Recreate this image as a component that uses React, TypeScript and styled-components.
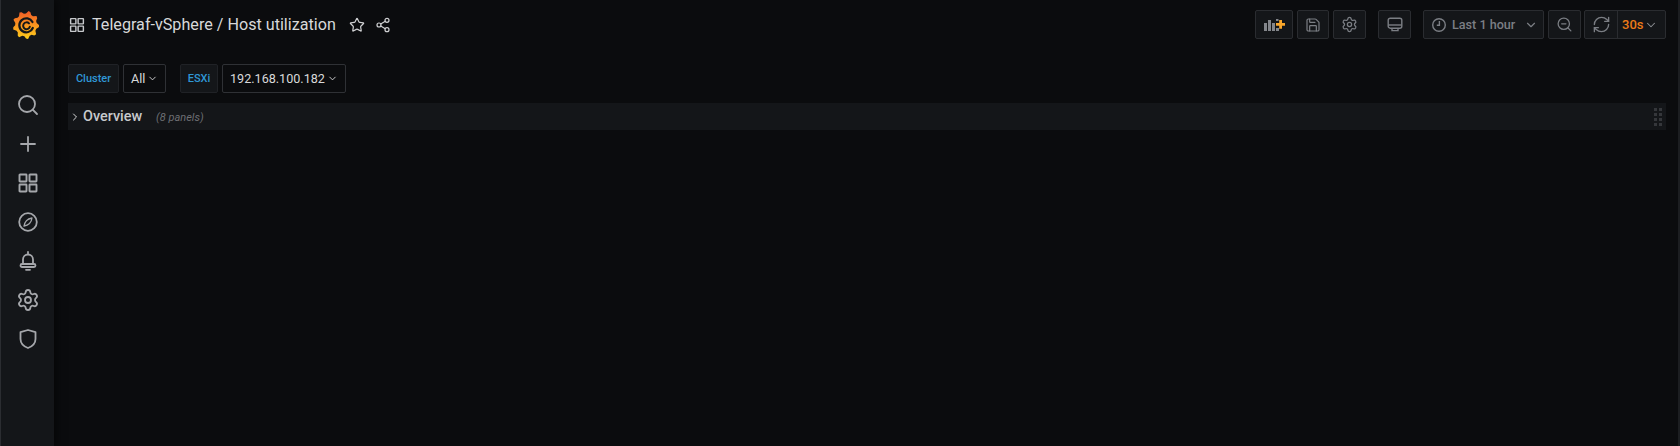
import React from 'react';
import styled, { createGlobalStyle } from 'styled-components';
import {
  Search, Plus, Settings, Star, Share2,
  ChevronDown, ChevronRight, Save, ZoomOut, RefreshCw,
} from 'lucide-react';

const GlobalStyle = createGlobalStyle`
  html, body {
    margin: 0;
    height: 100%;
    background: #0b0c0e;
    overflow: hidden;
  }
  #root {
    height: 100%;
  }
`;

// gear outline of the logo, teeth lean slightly clockwise
const gearPath = (() => {
  const teeth = 9;
  const step = (Math.PI * 2) / teeth;
  const points: string[] = [];
  for (let i = 0; i < teeth; i++) {
    const a = i * step - Math.PI / 2;
    const corners: [number, number][] = [[11.4, 0], [14.2, 0.28], [13.6, 0.5], [11.4, 0.72]];
    corners.forEach(([r, t]) => {
      const x = 13 + Math.cos(a + t * step) * r * 0.95;
      const y = 14 + Math.sin(a + t * step) * r;
      points.push(`${x.toFixed(2)} ${y.toFixed(2)}`);
    });
  }
  return `M${points.join('L')}Z`;
})();

function GrafanaLogo() {
  return (
    <svg width="26" height="28" viewBox="0 0 26 28">
      <defs>
        <linearGradient id="logoFill" x1="0" y1="1" x2="0" y2="0">
          <stop offset="0" stopColor="#fcce1c" />
          <stop offset="0.5" stopColor="#f9951f" />
          <stop offset="1" stopColor="#f05a28" />
        </linearGradient>
      </defs>
      <path fill="url(#logoFill)" d={gearPath} />
      <path
        fill="none"
        stroke="#141619"
        strokeWidth="2.2"
        strokeLinecap="round"
        d="M19.5 11A7 7 0 1 0 19.800 17"
      />
      <path
        fill="none"
        stroke="#141619"
        strokeWidth="2"
        strokeLinecap="round"
        d="M16.800 15.800A3.400 3.400 0 1 1 16 12.400"
      />
    </svg>
  );
}

function AddPanelIcon() {
  return (
    <svg width="21" height="12" viewBox="0 0 21 12">
      <g fill="#83868b">
        <rect x="0" y="4" width="3" height="8" />
        <rect x="4" y="1" width="3" height="11" />
        <rect x="8" y="4" width="3" height="8" />
        <rect x="12" y="0" width="2.5" height="2" />
        <rect x="12" y="9" width="3" height="3" />
      </g>
      <path fill="#f9a72b" d="M15.200 1h2.800v3h3v2.800h-3v3h-2.800v-3H12V4h3.200z" />
    </svg>
  );
}

function MonitorIcon() {
  return (
    <svg width="16" height="16" viewBox="0 0 16 16" fill="none" stroke="currentColor" strokeWidth="1.4">
      <rect x="1.2" y="1.2" width="13.6" height="10" rx="2" />
      <path d="M1.2 8h13.6" />
      <path d="M5 11.2v2.4h6v-2.4" />
    </svg>
  );
}

function ClockIcon() {
  return (
    <svg width="16" height="16" viewBox="0 0 16 16" fill="none" stroke="currentColor" strokeWidth="1.4">
      <circle cx="8" cy="8" r="6.3" />
      <path d="M8.4 4v4.3H5.8" />
    </svg>
  );
}

function GridIcon({ size }: { size: number }) {
  return (
    <svg width={size} height={size} viewBox="0 0 24 24" fill="none" stroke="currentColor" strokeWidth="1.9">
      <rect x="3.5" y="3.5" width="7" height="7" rx="0.5" />
      <rect x="13.5" y="3.5" width="7" height="7" rx="0.5" />
      <rect x="3.5" y="13.5" width="7" height="7" rx="0.5" />
      <rect x="13.5" y="13.5" width="7" height="7" rx="0.5" />
    </svg>
  );
}

function CompassIcon() {
  return (
    <svg width="24" height="24" viewBox="0 0 24 24" fill="none" stroke="currentColor" strokeWidth="1.8">
      <circle cx="12" cy="12" r="8.8" />
      <path fill="none" strokeWidth="1.300" strokeLinejoin="round" d="M16 8c-.3 2.600-1.200 4.200-2.500 5.500-1.300 1.100-3 2-5.500 2.500.4-2.400 1.200-4 2.500-5.400C11.800 9.300 13.600 8.500 16 8z" />
    </svg>
  );
}

function BellIcon() {
  return (
    <svg width="24" height="24" viewBox="0 0 24 24" fill="none" stroke="currentColor" strokeWidth="1.8" strokeLinecap="round">
      <path d="M12 3v1.500" />
      <path d="M7 15v-4.500a5 5 0 0 1 10 0V15" />
      <path d="M6 15h12a1.500 1.500 0 0 1 0 3H6a1.500 1.500 0 0 1 0-3z" />
      <path d="M10 20.800h4" />
    </svg>
  );
}

function ShieldIcon() {
  return (
    <svg width="24" height="24" viewBox="0 0 24 24" fill="none" stroke="currentColor" strokeWidth="1.8" strokeLinejoin="round">
      <path d="M12 3l7.500 2.200V12c0 4.400-3 7.300-7.500 9-4.500-1.700-7.500-4.600-7.500-9V5.200z" />
    </svg>
  );
}

export default function App() {
  return (
    <Page>
      <GlobalStyle />
      <SideMenu>
        <LogoSlot>
          <GrafanaLogo />
        </LogoSlot>
        <NavList>
          <NavItem><Search size={24} strokeWidth={1.8} /></NavItem>
          <NavItem><Plus size={24} strokeWidth={1.8} /></NavItem>
          <NavItem><GridIcon size={24} /></NavItem>
          <NavItem><CompassIcon /></NavItem>
          <NavItem><BellIcon /></NavItem>
          <NavItem><Settings size={24} strokeWidth={1.8} /></NavItem>
          <NavItem><ShieldIcon /></NavItem>
        </NavList>
      </SideMenu>
      <Main>
        <TopBar>
          <TitleGroup>
            <TitleIcon><GridIcon size={18} /></TitleIcon>
            <Title>Telegraf-vSphere / Host utilization</Title>
            <TitleAction $gap={13}><Star size={16} strokeWidth={1.8} /></TitleAction>
            <TitleAction $gap={10}><Share2 size={16} strokeWidth={1.8} /></TitleAction>
          </TitleGroup>
          <Toolbar>
            <ToolButton $width={38}><AddPanelIcon /></ToolButton>
            <ToolButton $width={32} $gap={4}><Save size={16} strokeWidth={1.8} /></ToolButton>
            <ToolButton $width={33} $gap={4}><Settings size={17} strokeWidth={1.8} /></ToolButton>
            <ToolButton $width={33} $gap={12}><MonitorIcon /></ToolButton>
            <TimeButton>
              <ClockIcon />
              <TimeLabel>Last 1 hour</TimeLabel>
              <ChevronDown size={14} strokeWidth={2} />
            </TimeButton>
            <ToolButton $width={33} $gap={4}><ZoomOut size={17} strokeWidth={1.8} /></ToolButton>
            <RefreshGroup>
              <RefreshPart><RefreshCw size={19} strokeWidth={1.7} /></RefreshPart>
              <IntervalPart>
                30s
                <ChevronDown size={14} strokeWidth={1.8} color="#8e9095" />
              </IntervalPart>
            </RefreshGroup>
          </Toolbar>
        </TopBar>
        <Variables>
          <VariableGroup>
            <VariableLabel $width={51}>Cluster</VariableLabel>
            <VariableValue $width={43}>
              All
              <ChevronDown size={11} strokeWidth={2} />
            </VariableValue>
          </VariableGroup>
          <VariableGroup>
            <VariableLabel $width={38}>ESXi</VariableLabel>
            <VariableValue $width={124}>
              192.168.100.182
              <ChevronDown size={11} strokeWidth={2} />
            </VariableValue>
          </VariableGroup>
        </Variables>
        <RowHeader>
          <ChevronRight size={12} strokeWidth={2} color="#d8d9da" />
          <RowTitle>Overview</RowTitle>
          <RowCount>(8 panels)</RowCount>
          <DragHandle>
            {Array.from({ length: 8 }).map((_, i) => <DragDot key={i} />)}
          </DragHandle>
        </RowHeader>
      </Main>
    </Page>
  );
}

const Page = styled.div`
  display: flex;
  height: 446px;
  box-sizing: border-box;
  background: #0b0c0e;
  border-right: 2px solid #1c1e21;
  font-family: Roboto, "Liberation Sans", sans-serif;
  color: #d8d9da;
`;

const SideMenu = styled.aside`
  width: 54px;
  flex: none;
  box-sizing: border-box;
  background: #141619;
  border-left: 1px solid #2b2d31;
  display: flex;
  flex-direction: column;
  align-items: center;
  box-shadow: 3px 0 8px rgba(0, 0, 0, 0.5);
`;

const LogoSlot = styled.div`
  height: 50px;
  padding-right: 3px;
  display: flex;
  align-items: center;
  justify-content: center;
`;

const NavList = styled.nav`
  margin-top: 35px;
  display: flex;
  flex-direction: column;
`;

const NavItem = styled.div`
  height: 39px;
  display: flex;
  align-items: center;
  justify-content: center;
  color: #a5a7ab;
`;

const Main = styled.main`
  flex: 1;
  min-width: 0;
  padding: 10px 12px 0 14px;
`;

const TopBar = styled.header`
  display: flex;
  justify-content: space-between;
  align-items: center;
  height: 29px;
`;

const TitleGroup = styled.div`
  display: flex;
  align-items: center;
`;

const TitleIcon = styled.span`
  display: flex;
  color: #c7c9cc;
`;

const Title = styled.h1`
  margin: 0 0 0 6px;
  font-size: 16.15px;
  font-weight: 400;
  color: #d8d9da;
  white-space: nowrap;
`;

const TitleAction = styled.span<{ $gap: number }>`
  display: flex;
  margin-left: ${props => props.$gap}px;
  color: #d0d1d3;
`;

const Toolbar = styled.div`
  display: flex;
`;

const ToolButton = styled.button<{ $width: number; $gap?: number }>`
  width: ${props => props.$width}px;
  height: 29px;
  margin-left: ${props => props.$gap || 0}px;
  padding: 0;
  display: flex;
  align-items: center;
  justify-content: center;
  background: #141619;
  border: 1px solid #2a2c30;
  border-radius: 2px;
  color: #7b7e84;
`;

const TimeButton = styled.button`
  width: 121px;
  height: 29px;
  margin-left: 12px;
  padding: 0 5px 0 7px;
  display: flex;
  align-items: center;
  background: #141619;
  border: 1px solid #2a2c30;
  border-radius: 2px;
  color: #7b7e84;
  font-family: inherit;
`;

const TimeLabel = styled.span`
  margin-left: 5px;
  margin-right: auto;
  font-size: 12.6px;
  font-weight: 500;
`;

const RefreshGroup = styled.div`
  display: flex;
  width: 82px;
  height: 29px;
  margin-left: 3px;
  box-sizing: border-box;
  background: #141619;
  border: 1px solid #2a2c30;
  border-radius: 2px;
`;

const RefreshPart = styled.div`
  width: 32px;
  display: flex;
  align-items: center;
  justify-content: center;
  border-right: 1px solid #2a2c30;
  color: #7b7e84;
`;

const IntervalPart = styled.div`
  flex: 1;
  display: flex;
  align-items: center;
  gap: 1px;
  padding-left: 4px;
  color: #eb7b18;
  font-size: 13px;
  font-weight: 500;
`;

const Variables = styled.section`
  display: flex;
  gap: 14px;
  margin-top: 25px;
`;

const VariableGroup = styled.div`
  display: flex;
  gap: 4px;
`;

const VariableLabel = styled.label<{ $width: number }>`
  width: ${props => props.$width}px;
  height: 29px;
  box-sizing: border-box;
  display: flex;
  align-items: center;
  justify-content: center;
  padding-bottom: 1px;
  background: #141619;
  border: 1px solid #202226;
  border-radius: 2px;
  color: #2f97d6;
  font-size: 11px;
  font-weight: 500;
`;

const VariableValue = styled.div<{ $width: number }>`
  width: ${props => props.$width}px;
  height: 29px;
  box-sizing: border-box;
  display: flex;
  align-items: center;
  gap: 2px;
  padding-left: 7px;
  background: #0b0c0e;
  border: 1px solid #2f3135;
  border-radius: 2px;
  color: #d8d9da;
  font-size: 12.6px;
`;

const RowHeader = styled.div`
  display: flex;
  align-items: center;
  height: 27px;
  margin-top: 10px;
  padding-left: 1px;
  background: #141619;
`;

const RowTitle = styled.span`
  margin-left: 2px;
  font-size: 14.4px;
  font-weight: 500;
  color: #c7c9cc;
`;

const RowCount = styled.span`
  margin-left: 14px;
  padding-top: 2px;
  font-size: 11px;
  font-style: italic;
  color: #6c6e73;
`;

const DragHandle = styled.div`
  margin-left: auto;
  margin-right: 4px;
  display: grid;
  grid-template-columns: 3px 3px;
  gap: 2px;
`;

const DragDot = styled.span`
  width: 3px;
  height: 3px;
  background: #35373b;
`;
